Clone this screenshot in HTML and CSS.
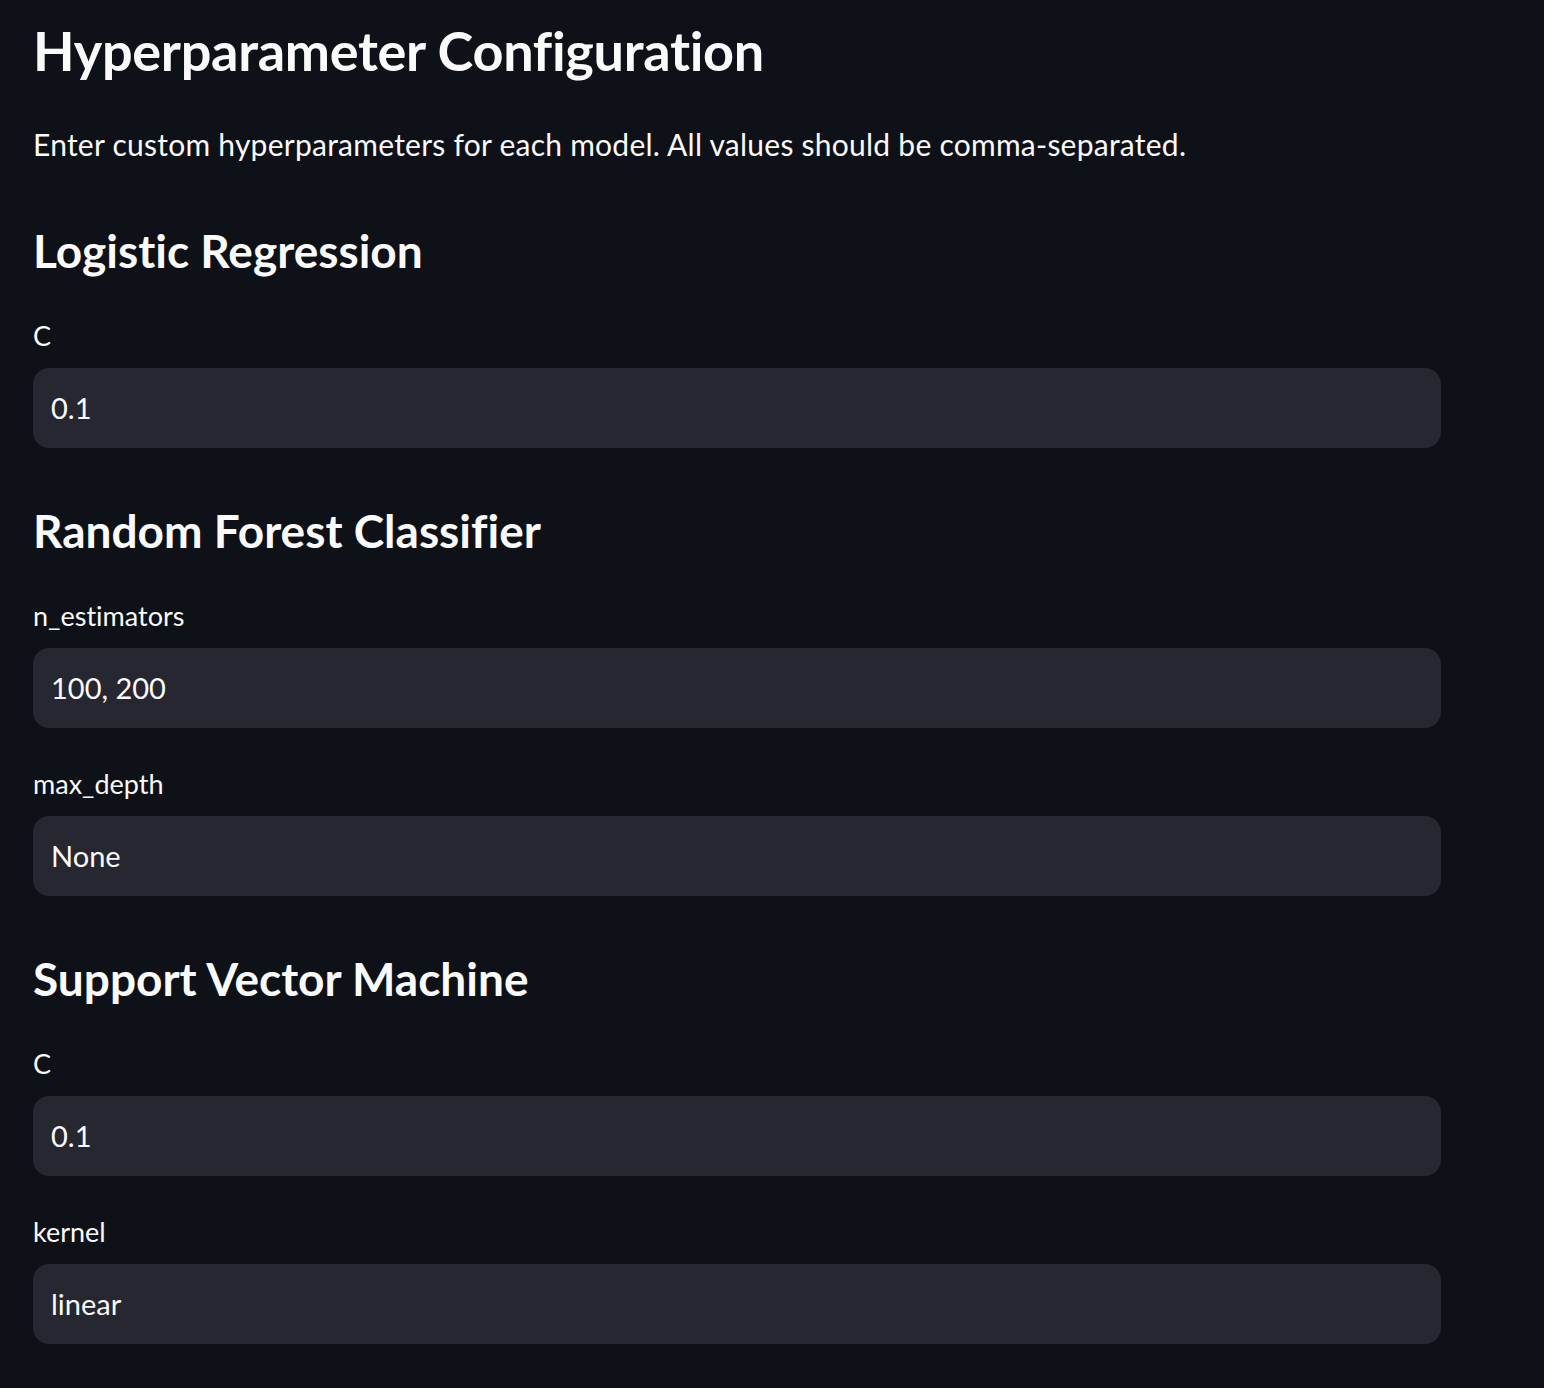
FILE: index.html
```html
<!DOCTYPE html>
<html lang="en">
<head>
<meta charset="utf-8">
<title>Hyperparameter Configuration</title>
<link rel="stylesheet" href="styles.css">
</head>
<body>
<main class="page">
  <h1 class="title">Hyperparameter Configuration</h1>
  <p class="intro">Enter custom hyperparameters for each model. All values should be comma-separated.</p>

  <section class="model">
    <h3 class="model-title">Logistic Regression</h3>
    <div class="fields">
      <label class="field">
        <span class="field-label">C</span>
        <input class="field-input" type="text" value="0.1" readonly>
      </label>
    </div>
  </section>

  <section class="model">
    <h3 class="model-title">Random Forest Classifier</h3>
    <div class="fields">
      <label class="field">
        <span class="field-label">n_estimators</span>
        <input class="field-input" type="text" value="100, 200" readonly>
      </label>
      <label class="field">
        <span class="field-label">max_depth</span>
        <input class="field-input" type="text" value="None" readonly>
      </label>
    </div>
  </section>

  <section class="model">
    <h3 class="model-title">Support Vector Machine</h3>
    <div class="fields">
      <label class="field">
        <span class="field-label">C</span>
        <input class="field-input" type="text" value="0.1" readonly>
      </label>
      <label class="field">
        <span class="field-label">kernel</span>
        <input class="field-input" type="text" value="linear" readonly>
      </label>
    </div>
  </section>
</main>
</body>
</html>
```

FILE: styles.css
```css
* {
  box-sizing: border-box;
}

html, body {
  margin: 0;
  padding: 0;
  background: #0e1117;
}

body {
  min-height: 1388px;
  color: #fafafa;
  font-family: Lato, "Open Sans", "Liberation Sans", sans-serif;
  font-variant-ligatures: none;
}

.page {
  width: 1441px;
  padding: 15px 0 0 33px;
  display: flex;
  flex-direction: column;
}

.title {
  margin: 0;
  font-size: 54px;
  line-height: 72px;
  font-weight: 700;
  letter-spacing: -0.3px;
}

.intro {
  margin: 33px 0 0;
  font-size: 30px;
  line-height: 48px;
  font-weight: 400;
  letter-spacing: 0.25px;
}

.model {
  display: flex;
  flex-direction: column;
}

.model-title {
  margin: 51px 0 29px;
  font-size: 46px;
  line-height: 64px;
  font-weight: 700;
}

.fields {
  display: flex;
  flex-direction: column;
  gap: 32px;
}

.field {
  display: flex;
  flex-direction: column;
  gap: 8px;
}

.field-label {
  display: block;
  height: 48px;
  font-size: 27px;
  line-height: 48px;
}

.field-input {
  display: block;
  width: 100%;
  height: 80px;
  margin: 0;
  padding: 0 18px;
  border: none;
  border-radius: 16px;
  background: #262730;
  color: #fafafa;
  font-family: inherit;
  font-variant-ligatures: none;
  font-size: 29px;
  line-height: 80px;
  outline: none;
}
```
